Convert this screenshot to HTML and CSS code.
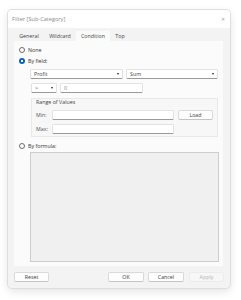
FILE: index.html
```html
<!DOCTYPE html>
<html>
<head>
<meta charset="utf-8">
<link rel="stylesheet" href="styles.css">
</head>
<body>
<div class="page">
  <div class="dialog">
    <div class="titlebar">
      <span class="title">Filter [Sub-Category]</span>
      <span class="close">✕</span>
    </div>
    <div class="tabs">
      <div class="tab t-general">General</div>
      <div class="tab t-wild">Wildcard</div>
      <div class="tab t-cond active">Condition</div>
      <div class="tab t-top">Top</div>
    </div>
    <div class="panel">
      <div class="radio-row">
        <span class="radio"></span><span>None</span>
      </div>
      <div class="radio-row r2">
        <span class="radio checked"></span><span>By field:</span>
      </div>
      <div class="field-block">
        <div class="row">
          <div class="select w-profit"><span>Profit</span><span class="arrow"></span></div>
          <div class="select w-sum"><span>Sum</span><span class="arrow"></span></div>
        </div>
        <div class="row op-row">
          <div class="select w-op"><span>&gt;</span><span class="arrow"></span></div>
          <div class="input w-val">0</div>
        </div>
        <div class="group">
          <div class="group-label">Range of Values</div>
          <div class="grow">
            <span class="glabel">Min:</span>
            <div class="input w-range"></div>
            <div class="btn load">Load</div>
          </div>
          <div class="grow g2">
            <span class="glabel">Max:</span>
            <div class="input w-range"></div>
          </div>
        </div>
      </div>
      <div class="radio-row r3">
        <span class="radio"></span><span>By formula:</span>
      </div>
      <div class="formula"></div>
    </div>
    <div class="buttons">
      <div class="btn b-reset">Reset</div>
      <div class="spacer"></div>
      <div class="btn b-ok">OK</div>
      <div class="btn b-cancel">Cancel</div>
      <div class="btn b-apply disabled">Apply</div>
    </div>
  </div>
</div>
</body>
</html>
```

FILE: styles.css
```css
* { box-sizing: border-box; }
html, body { margin: 0; padding: 0; background: #ffffff; }
body {
  font-family: "Open Sans", "Noto Sans", sans-serif;
  font-size: 5.3px;
  color: #333333;
  width: 241px;
  height: 300px;
  overflow: hidden;
}
.page { padding: 10px 0 0 8px; }
.dialog {
  width: 222px;
  height: 278px;
  background: #f3f3f3;
  border-radius: 4px;
  box-shadow: 0 0 0 1px #dedede, 0 3px 10px rgba(0,0,0,0.12);
  overflow: hidden;
}
.titlebar {
  height: 18px;
  background: #ffffff;
  display: flex;
  align-items: center;
  justify-content: space-between;
  padding: 0 5px 0 4px;
}
.title { color: #8c8c8c; font-size: 5.6px; }
.close { color: #a0a0a0; font-size: 5px; }
.tabs {
  display: flex;
  padding: 3px 0 0 6px;
  height: 13px;
}
.tab {
  height: 10px;
  display: flex;
  align-items: center;
  justify-content: center;
  color: #444;
}
.t-general { width: 30px; }
.t-wild { width: 32px; }
.t-cond { width: 34px; }
.t-top { width: 18px; margin-left: 1px; }
.tab.active { background: #fbfbfb; }
.panel {
  margin: 0 7px 0 6px;
  height: 225px;
  background: #fbfbfb;
  padding: 4px 5px 0 5px;
}
.radio-row {
  height: 10px;
  display: flex;
  align-items: center;
  gap: 3px;
}
.r2 { margin-top: 1px; }
.r3 { margin-top: 4px; }
.radio {
  width: 6px;
  height: 6px;
  border-radius: 50%;
  border: 0.8px solid #6a6a6a;
  background: #fff;
}
.radio.checked {
  border: none;
  background: radial-gradient(circle, #ffffff 0 1.2px, #0067c0 1.5px);
}
.field-block { margin: 3px 0 0 11px; }
.row { display: flex; gap: 3px; height: 10px; }
.select, .input {
  height: 10px;
  background: #ffffff;
  border: 0.6px solid #e2e2e2;
  border-bottom: 0.8px solid #9a9a9a;
  border-radius: 1.5px;
  display: flex;
  align-items: center;
  justify-content: space-between;
  padding: 0 3px 0 3px;
  color: #444;
}
.arrow {
  width: 0; height: 0;
  border-left: 1.5px solid transparent;
  border-right: 1.5px solid transparent;
  border-top: 2px solid #222;
}
.w-profit { width: 93px; }
.w-sum { width: 92px; }
.op-row { margin: 4px 0 0 1px; }
.w-op { width: 26px; }
.w-val { width: 83px; color: #888; }
.group {
  margin: 5px 0 0 1px;
  width: 187px;
  height: 39px;
  border: 0.6px solid #e8e8e8;
  background: #f7f7f7;
  padding: 0 0 0 4px;
}
.group-label { height: 6px; line-height: 6px; color: #444; }
.grow { display: flex; align-items: center; height: 10px; margin-top: 5px; }
.g2 { margin-top: 4px; }
.glabel { width: 16px; color: #555; }
.w-range { width: 122px; }
.btn {
  height: 10px;
  background: #fdfdfd;
  border: 0.6px solid #dadada;
  border-bottom: 0.8px solid #c4c4c4;
  border-radius: 2px;
  display: flex;
  align-items: center;
  justify-content: center;
  color: #3c3c3c;
}
.load { width: 35px; margin-left: 4px; }
.formula {
  margin: 1px 0 0 11px;
  width: 189px;
  height: 110px;
  background: #f0f0f0;
  border: 0.8px solid #cdcdcd;
}
.buttons {
  display: flex;
  margin: 6px 6px 0 6px;
}
.spacer { flex: 1; }
.b-reset { width: 35px; }
.b-ok { width: 36px; }
.b-cancel { width: 36px; margin-left: 4px; }
.b-apply { width: 35px; margin-left: 5px; }
.btn.disabled { background: #f7f7f7; color: #b4b4b4; border-color: #ececec; }
```
